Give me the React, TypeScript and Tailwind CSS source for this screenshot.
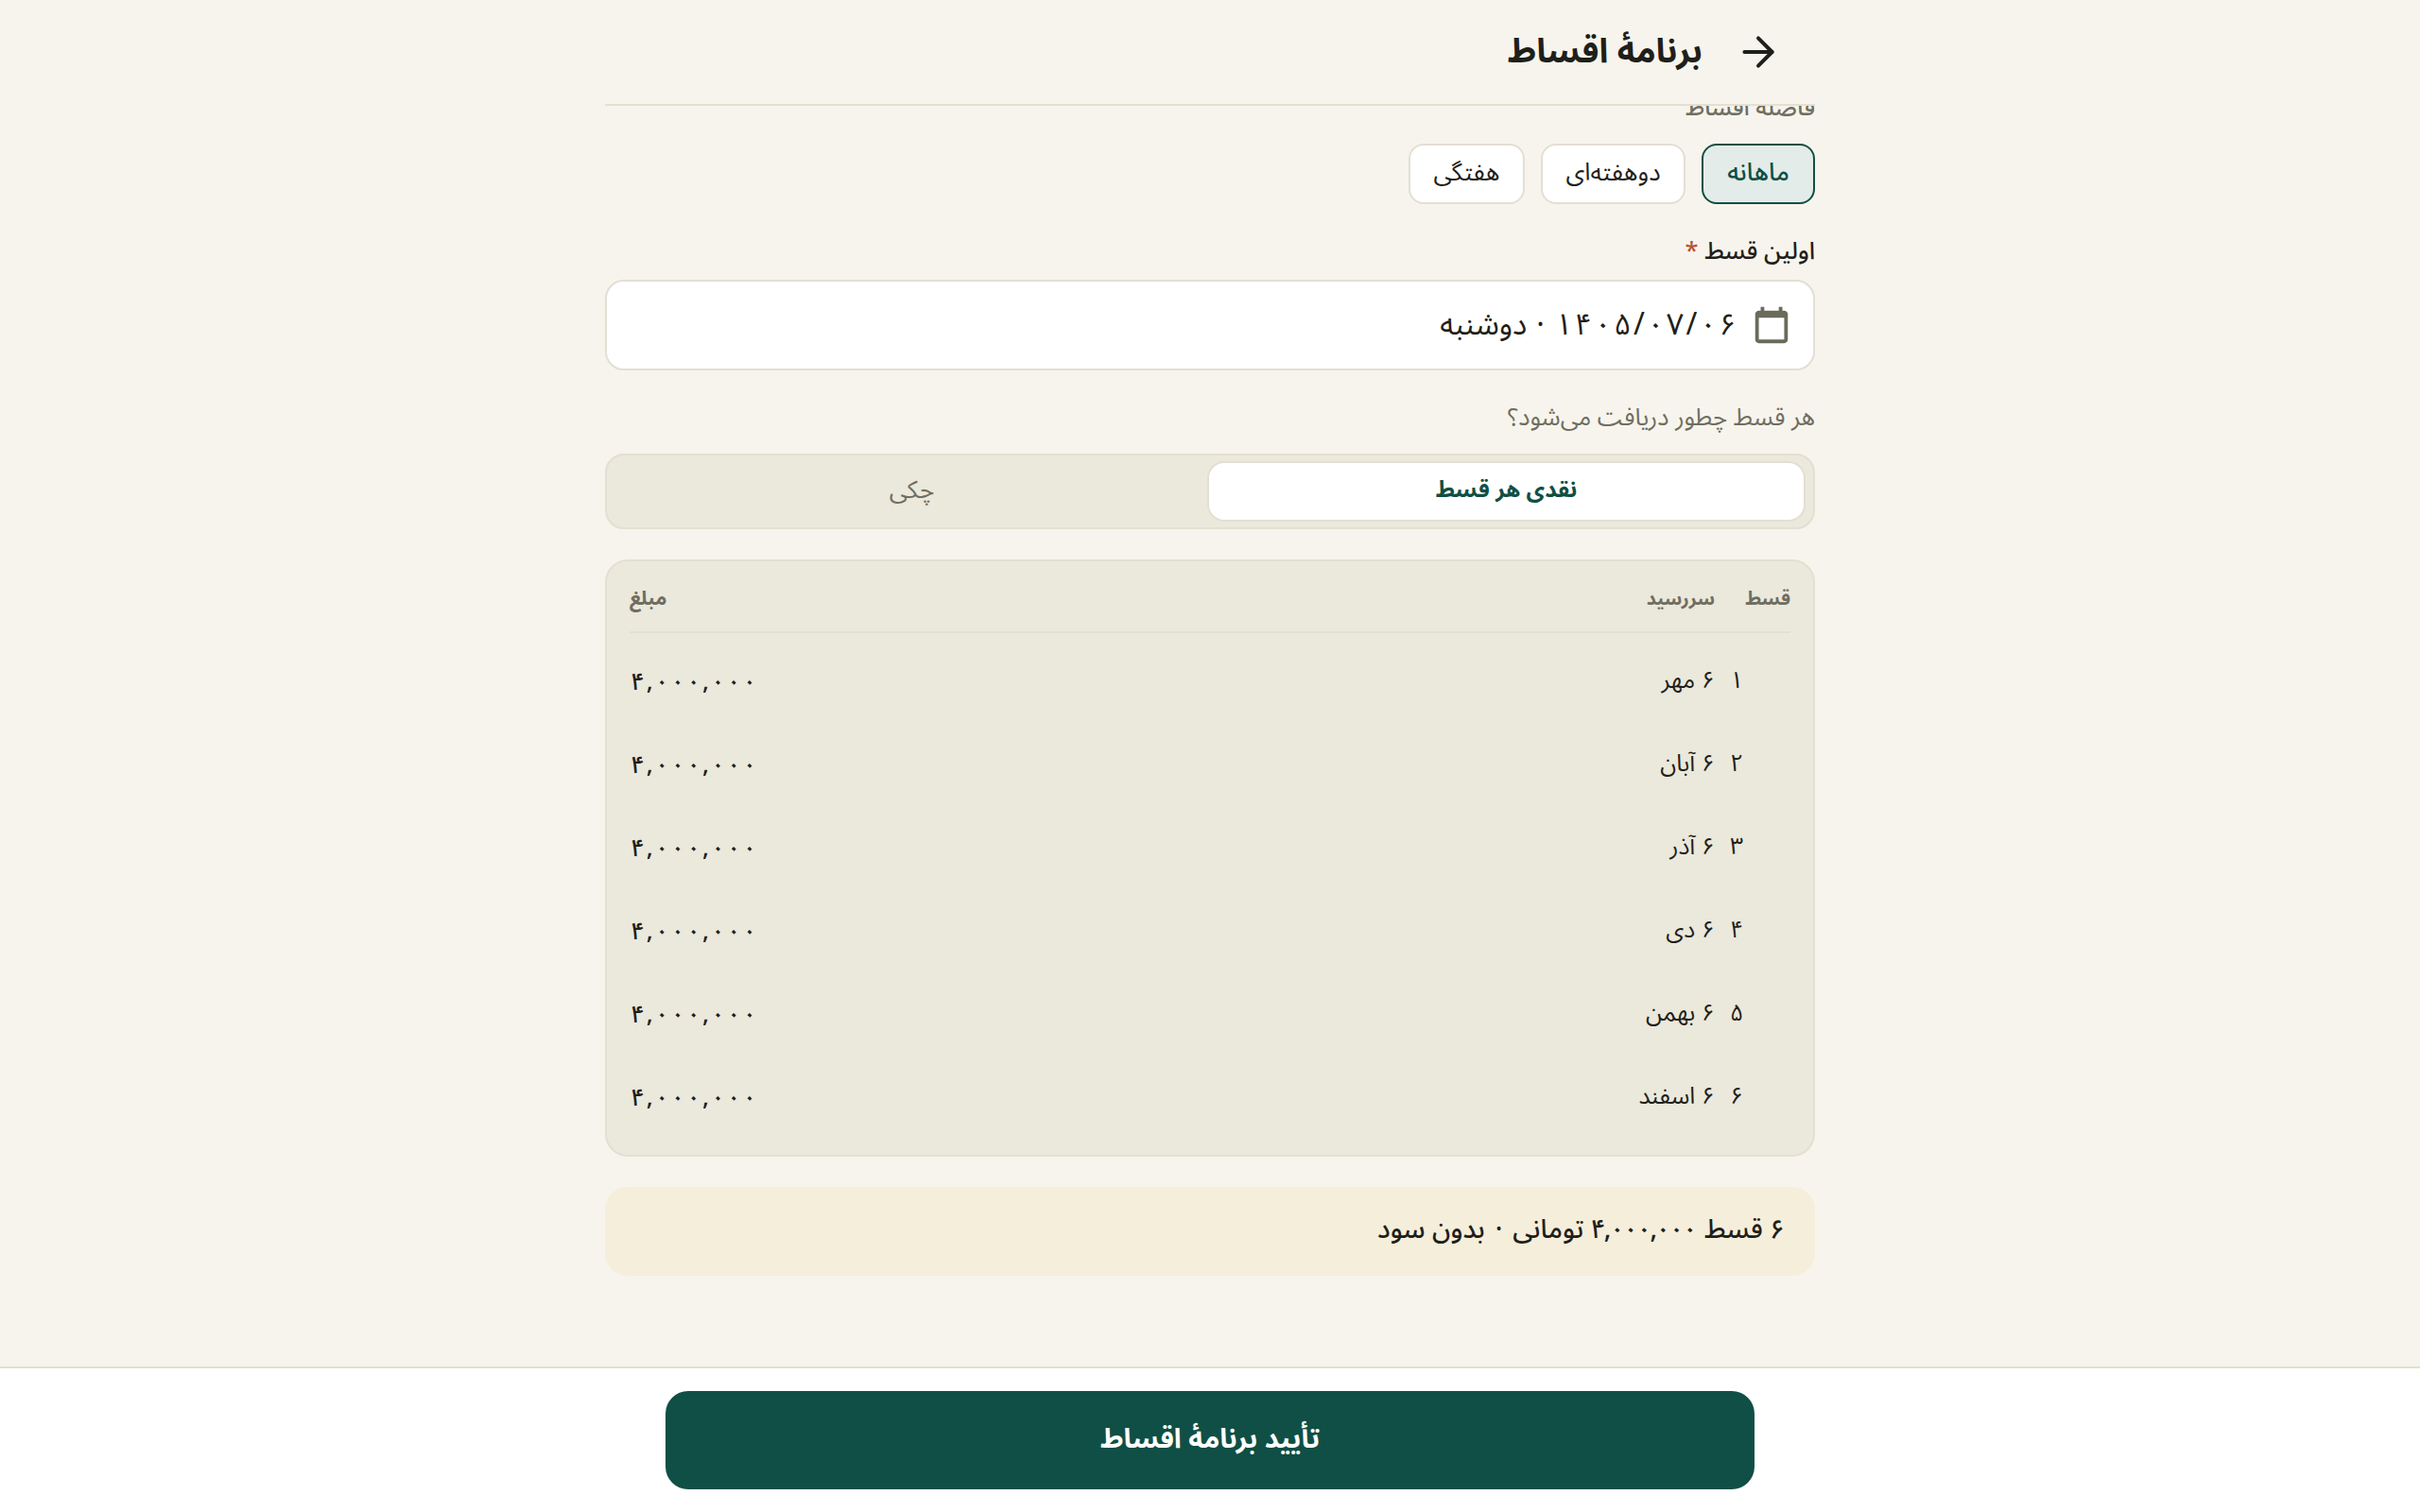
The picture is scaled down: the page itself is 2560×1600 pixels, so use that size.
import React from 'react';
import { ArrowRight } from 'lucide-react';

const rows = [
  { no: '۱', date: '۶ مهر' },
  { no: '۲', date: '۶ آبان' },
  { no: '۳', date: '۶ آذر' },
  { no: '۴', date: '۶ دی' },
  { no: '۵', date: '۶ بهمن' },
  { no: '۶', date: '۶ اسفند' },
];

const chips = [
  { id: 'monthly', label: 'ماهانه', width: 'w-[120px]', active: true },
  { id: 'biweekly', label: 'دوهفته‌ای', width: 'w-[153px]', active: false },
  { id: 'weekly', label: 'هفتگی', width: 'w-[123px]', active: false },
];

// letter-spacing has no effect on Arabic-script digits, so each glyph gets its own margin
const Digits: React.FC<{ text: string; charClass: string }> = ({ text, charClass }) => (
  <span dir="ltr" className="inline-flex">
    {Array.from(text).map((ch, i) => (
      <span key={i} className={charClass}>
        {ch}
      </span>
    ))}
  </span>
);

const App: React.FC = () => {
  return (
    <div
      dir="rtl"
      className="h-[1600px] flex flex-col bg-[#f7f4ed] text-[#1f1f1a] font-['Noto_Sans_Arabic','Noto_Sans','DejaVu_Sans',sans-serif] overflow-hidden"
    >
      <header className="w-[1280px] mx-auto h-[112px] shrink-0 border-b-2 border-[#e3dfd2] flex items-center gap-[34px] pr-[35px]">
        <ArrowRight className="w-[50px] h-[50px] text-[#1f1f1a]" strokeWidth={1.9} />
        <h1 className="text-[36px] font-bold leading-none">برنامهٔ اقساط</h1>
      </header>

      <main className="flex-1 overflow-hidden">
        <div className="w-[1280px] mx-auto -mt-[16px]">
          <div className="text-[25px] leading-[36px] font-medium text-[#6f6e60]">فاصله اقساط</div>

          <div className="flex gap-[17px] mt-[20px]">
            {chips.map((chip) => (
              <button
                key={chip.id}
                className={`${chip.width} h-[64px] rounded-[16px] border-2 text-[26px] pb-[4px] flex items-center justify-center ${
                  chip.active
                    ? 'bg-[#e3ece8] border-[#104f45] text-[#104f45] font-medium'
                    : 'bg-white border-[#e3dfd2] text-[#1f1f1a]'
                }`}
              >
                {chip.label}
              </button>
            ))}
          </div>

          <label className="block mt-[32px] text-[25.5px] leading-[36px] font-medium">
            اولین قسط <span className="text-[#b8522f]">*</span>
          </label>

          <div className="mt-[12px] h-[96px] rounded-[20px] border-2 border-[#e3dfd2] bg-white flex items-center gap-[13px] pr-[21px]">
            <svg viewBox="0 0 24 24" className="w-[46px] h-[46px] fill-[#6b6b5c]">
              <path d="M19 4h-1V2h-2v2H8V2H6v2H5c-1.1 0-2 .9-2 2v14c0 1.1.9 2 2 2h14c1.1 0 2-.9 2-2V6c0-1.1-.9-2-2-2zm0 16H5V8h14v12z" />
            </svg>
            <span className="text-[32px] flex items-center gap-[10px]">
              <Digits text="۱۴۰۵/۰۷/۰۶" charClass="mx-[1.2px]" />
              <span>·</span>
              <span>دوشنبه</span>
            </span>
          </div>

          <div className="mt-[32px] text-[25.7px] leading-[36px] text-[#6f6e60]">هر قسط چطور دریافت می‌شود؟</div>

          <div className="mt-[20px] h-[80px] rounded-[20px] border-2 border-[#e3dfd2] bg-[#ebe8dc] p-[8px] pr-[10px] grid grid-cols-2">
            <button className="bg-white rounded-[16px] shadow-[0_0_0_2px_#e3dfd2] text-[24px] font-bold text-[#104f45] pb-[2px]">
              نقدی هر قسط
            </button>
            <button className="text-[26px] text-[#6f6e60] pb-[4px]">چکی</button>
          </div>

          <section className="mt-[32px] rounded-[24px] border-2 border-[#e3dfd2] bg-[#ebe8dc] px-[24px] pb-[17px]">
            <div className="h-[76px] pt-[5px] flex items-center border-b-2 border-[#e3dfd2] text-[20px] font-bold text-[#6f6e60]">
              <span className="w-[64px]">قسط</span>
              <span className="mr-[16px] text-[19.5px]">سررسید</span>
              <span className="mr-auto text-[21px]">مبلغ</span>
            </div>
            <div className="mt-[7px]">
              {rows.map((row) => (
                <div key={row.no} className="h-[88px] flex items-center text-[25px]">
                  <span className="w-[64px] text-left">{row.no}</span>
                  <span className="mr-[16px]">{row.date}</span>
                  <span className="mr-auto text-[26px] font-medium">
                    <Digits text="۴,۰۰۰,۰۰۰" charClass="mx-[0.95px]" />
                  </span>
                </div>
              ))}
            </div>
          </section>

          <div className="mt-[32px] h-[94px] pb-[2px] rounded-[24px] bg-[#f5eedb] flex items-center gap-[8px] px-[32px] text-[28px] font-medium">
            <span>۶ قسط</span>
            <Digits text="۴,۰۰۰,۰۰۰" charClass="-mx-[0.9px]" />
            <span>تومانی</span>
            <span className="mx-[3px]">·</span>
            <span>بدون سود</span>
          </div>
        </div>
      </main>

      <footer className="h-[154px] shrink-0 bg-white border-t-2 border-[#e3dfd2] flex justify-center pt-[24px]">
        <button className="w-[1152px] h-[104px] pb-[2px] rounded-[24px] bg-[#104f45] text-white text-[29px] font-bold">
          تأیید برنامهٔ اقساط
        </button>
      </footer>
    </div>
  );
};

export default App;
